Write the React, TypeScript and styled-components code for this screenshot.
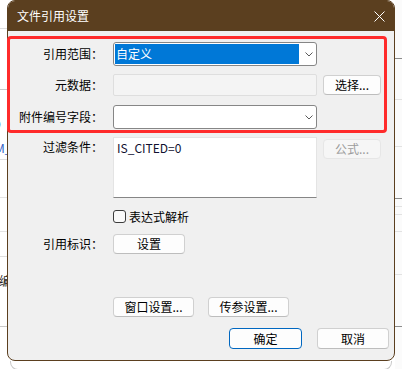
import React from 'react';
import styled, { createGlobalStyle } from 'styled-components';

const BROWN = '#5b3f1f';

const GlobalStyle = createGlobalStyle`
  html, body {
    margin: 0;
    padding: 0;
    background: #fff;
  }
  body {
    font-family: "Noto Sans CJK SC", "Noto Sans", sans-serif;
    font-size: 12px;
    color: #000;
  }
  * {
    box-sizing: border-box;
  }
`;

const Page = styled.div`
  display: flex;
  width: 402px;
  height: 369px;
  overflow: hidden;
  background: #fff;
`;

/* sheet behind the dialog, only thin strips are visible */
const Strip = styled.div<{ $side: 'left' | 'right' }>`
  width: 7px;
  flex: none;
  display: flex;
  flex-direction: column;
  overflow: hidden;
  background: ${p => (p.$side === 'left' ? '#fff' : '#fbfbfb')};
`;

const StripCell = styled.div<{ $h: number; $line: string }>`
  flex: none;
  height: ${p => p.$h}px;
  border-bottom: 1px solid ${p => p.$line};
  display: flex;
  align-items: center;
  white-space: nowrap;
`;

const StripText = styled.span<{ $tone: 'blue' | 'dark'; $shift: number }>`
  margin-left: ${p => p.$shift}px;
  font-size: 12px;
  line-height: 14px;
  color: ${p => (p.$tone === 'blue' ? '#2f5fc4' : '#222')};
`;

const Center = styled.div`
  width: 388px;
  flex: none;
  display: flex;
  flex-direction: column;
`;

const Dialog = styled.div`
  height: 361px;
  flex: none;
  border: 1px solid ${BROWN};
  border-radius: 8px;
  background: #f0f0f0;
  display: flex;
  flex-direction: column;
`;

const BackFrame = styled.div`
  height: 9px;
  flex: none;
  margin: 0 3px;
  border: 1px solid #c9c9c9;
  border-top: none;
  border-radius: 0 0 8px 8px;
`;

const TitleBar = styled.div`
  height: 30px;
  flex: none;
  display: flex;
  align-items: center;
  justify-content: space-between;
  padding: 0 9px 0 9px;
  background: ${BROWN};
  border-radius: 7px 7px 0 0;
  color: #fff;
`;

const Title = styled.span`
  font-size: 12px;
  line-height: 16px;
`;

const Body = styled.div`
  flex: 1;
  display: flex;
  flex-direction: column;
  padding: 5px 0 11px;
`;

const Highlight = styled.section`
  margin-left: -1px;
  width: 380px;
  border: 3px solid #ff2b2b;
  border-radius: 4px;
  padding: 3px 0 1px;
  display: flex;
  flex-direction: column;
`;

const Lower = styled.div`
  padding-left: 2px;
  display: flex;
  flex-direction: column;
`;

const Row = styled.div<{ $top?: number; $align?: string }>`
  display: grid;
  grid-template-columns: 103px 204px 64px;
  align-items: ${p => p.$align || 'center'};
  margin-top: ${p => p.$top || 0}px;
`;

const Label = styled.label`
  text-align: right;
  padding-right: 10px;
  white-space: nowrap;
  line-height: 20px;
`;

const Combo = styled.div<{ $h: number }>`
  height: ${p => p.$h}px;
  display: flex;
  padding: 1px 0 1px 1px;
  border: 1px solid #868686;
  border-radius: 3px;
  background: #fff;
`;

const ComboValue = styled.div<{ $selected?: boolean }>`
  flex: 1;
  padding-left: 1px;
  line-height: 20px;
  font-size: 12px;
  background: ${p => (p.$selected ? '#0078d7' : 'transparent')};
  color: ${p => (p.$selected ? '#fff' : '#000')};
`;

const ComboArrow = styled.div`
  width: 17px;
  flex: none;
  display: flex;
  align-items: center;
  justify-content: center;
  padding-left: 2px;
`;

const ReadOnlyField = styled.div`
  height: 22px;
  border: 1px solid #dedede;
  border-radius: 2px;
  background: #f4f4f4;
`;

const TextArea = styled.div`
  height: 61px;
  padding: 2px 3px;
  background: #fff;
  border: 1px solid #e4e4e4;
  border-bottom: 1px solid #868686;
  line-height: 16px;
  font-size: 12px;
  color: #101030;
`;

const Button = styled.button<{ $w: number; $h?: number; $primary?: boolean }>`
  width: ${p => p.$w}px;
  height: ${p => p.$h || 20}px;
  padding: 0;
  margin: 0;
  border: 1px solid ${p => (p.$primary ? '#0067c0' : '#d0d0d0')};
  border-bottom-color: ${p => (p.$primary ? '#0067c0' : '#bdbdbd')};
  border-radius: 4px;
  background: #fdfdfd;
  font-family: inherit;
  font-size: 12px;
  line-height: 16px;
  color: #000;
  display: flex;
  align-items: center;
  justify-content: center;

  &:disabled {
    background: #f6f6f6;
    border-color: #e6e6e6;
    color: #9c9c9c;
  }
`;

const SideButton = styled(Button)`
  justify-self: end;
  margin-right: 0;
`;

const CheckLabel = styled.label`
  display: flex;
  align-items: center;
  gap: 3px;
  height: 13px;
  line-height: 14px;
  white-space: nowrap;
`;

const CheckBox = styled.span`
  width: 13px;
  height: 13px;
  flex: none;
  border: 1px solid #3c3c3c;
  border-radius: 3px;
  background: #fafafa;
`;

const ButtonBar = styled.div<{ $top: number; $end?: boolean }>`
  display: flex;
  gap: ${p => (p.$end ? 15 : 14)}px;
  justify-content: ${p => (p.$end ? 'flex-end' : 'flex-start')};
  margin-top: ${p => p.$top}px;
  padding-left: ${p => (p.$end ? 0 : 103)}px;
  padding-right: ${p => (p.$end ? 5 : 0)}px;
`;

type Line = { y: number; color: string; text?: string; tone?: 'blue' | 'dark'; shift?: number };

const leftLines: Line[] = [
  { y: 29, color: '#dedede' },
  { y: 90, color: '#c9c9c9' },
  { y: 112, color: 'transparent' },
  { y: 136, color: 'transparent', text: 'O', tone: 'blue', shift: -8 },
  { y: 160, color: '#dedede', text: 'M_', tone: 'blue', shift: -5 },
  { y: 198, color: '#e4e4e4' },
  { y: 232, color: '#e4e4e4' },
  { y: 257, color: '#dedede' },
  { y: 270, color: 'transparent' },
  { y: 293, color: 'transparent', text: '编', tone: 'dark', shift: -1 },
  { y: 327, color: '#c9c9c9' },
  { y: 369, color: 'transparent' },
];

const rightLines: Line[] = [
  { y: 59, color: '#8c8c8c' },
  { y: 100, color: '#e2e2e2' },
  { y: 147, color: '#e2e2e2' },
  { y: 199, color: '#8c8c8c' },
  { y: 207, color: '#e2e2e2' },
  { y: 215, color: '#e2e2e2' },
  { y: 232, color: '#e2e2e2' },
  { y: 275, color: '#e2e2e2' },
  { y: 327, color: '#8c8c8c' },
  { y: 369, color: 'transparent' },
];

function SheetStrip({ side, lines }: { side: 'left' | 'right'; lines: Line[] }) {
  let prev = 0;
  return (
    <Strip $side={side}>
      {lines.map((l, i) => {
        const h = l.y - prev;
        prev = l.y;
        return (
          <StripCell key={i} $h={h} $line={l.color}>
            {l.text && (
              <StripText $tone={l.tone || 'dark'} $shift={l.shift || 0}>
                {l.text}
              </StripText>
            )}
          </StripCell>
        );
      })}
    </Strip>
  );
}

const Chevron = () => (
  <svg width="8" height="5" viewBox="0 0 8 5">
    <path d="M0.5 0.5 L4 4 L7.5 0.5" fill="none" stroke="#5a5a5a" strokeWidth="1" />
  </svg>
);

const CloseIcon = () => (
  <svg width="11" height="11" viewBox="0 0 11 11">
    <path d="M0.5 0.5 L10.5 10.5 M10.5 0.5 L0.5 10.5" stroke="#fff" strokeWidth="1" />
  </svg>
);

export default function App() {
  return (
    <>
      <GlobalStyle />
      <Page>
        <SheetStrip side="left" lines={leftLines} />
        <Center>
          <Dialog>
            <TitleBar>
              <Title>文件引用设置</Title>
              <CloseIcon />
            </TitleBar>
            <Body>
              <Highlight>
                <Row>
                  <Label>引用范围：</Label>
                  <Combo $h={24}>
                    <ComboValue $selected>自定义</ComboValue>
                    <ComboArrow>
                      <Chevron />
                    </ComboArrow>
                  </Combo>
                </Row>
                <Row $top={8}>
                  <Label>元数据：</Label>
                  <ReadOnlyField />
                  <SideButton $w={58}>选择...</SideButton>
                </Row>
                <Row $top={9}>
                  <Label>附件编号字段：</Label>
                  <Combo $h={24}>
                    <ComboValue />
                    <ComboArrow>
                      <Chevron />
                    </ComboArrow>
                  </Combo>
                </Row>
              </Highlight>
              <Lower>
                <Row $top={4} $align="start">
                  <Label>过滤条件：</Label>
                  <TextArea>IS_CITED=0</TextArea>
                  <SideButton $w={58} disabled style={{ marginTop: 2 }}>
                    公式...
                  </SideButton>
                </Row>
                <Row $top={12}>
                  <span />
                  <CheckLabel>
                    <CheckBox />
                    表达式解析
                  </CheckLabel>
                </Row>
                <Row $top={11}>
                  <Label>引用标识：</Label>
                  <Button $w={72}>设置</Button>
                </Row>
                <ButtonBar $top={43}>
                  <Button $w={81}>窗口设置...</Button>
                  <Button $w={81}>传参设置...</Button>
                </ButtonBar>
                <ButtonBar $top={11} $end>
                  <Button $w={73} $h={21} $primary>
                    确定
                  </Button>
                  <Button $w={72} $h={21}>
                    取消
                  </Button>
                </ButtonBar>
              </Lower>
            </Body>
          </Dialog>
          <BackFrame />
        </Center>
        <SheetStrip side="right" lines={rightLines} />
      </Page>
    </>
  );
}
